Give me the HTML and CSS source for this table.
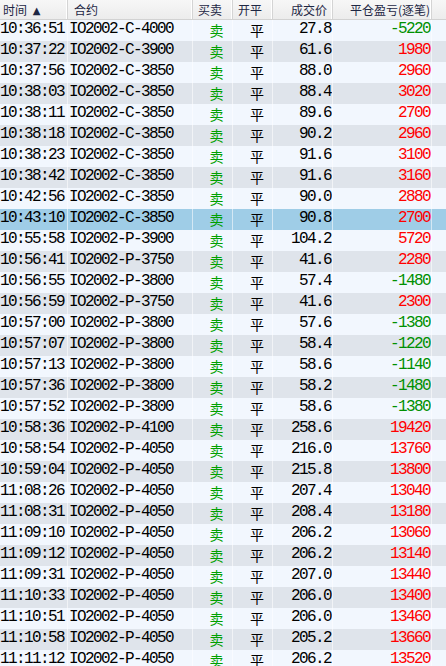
FILE: index.html
```html
<!DOCTYPE html>
<html>
<head>
<meta charset="utf-8">
<link rel="stylesheet" href="styles.css">
</head>
<body>
<div class="grid">
  <div class="head">
    <div class="hc c-time">时间 <span class="arrow">▲</span></div>
    <div class="hc c-code">合约</div>
    <div class="hc c-bs">买卖</div>
    <div class="hc c-oc">开平</div>
    <div class="hc c-px right">成交价</div>
    <div class="hc c-pl right">平仓盈亏(逐笔)</div>
    <div class="hc c-fill"></div>
  </div>
  <div id="rows"></div>
</div>
<script>
var data = [
["10:36:51","IO2002-C-4000","27.8","-5220"],
["10:37:22","IO2002-C-3900","61.6","1980"],
["10:37:56","IO2002-C-3850","88.0","2960"],
["10:38:03","IO2002-C-3850","88.4","3020"],
["10:38:11","IO2002-C-3850","89.6","2700"],
["10:38:18","IO2002-C-3850","90.2","2960"],
["10:38:23","IO2002-C-3850","91.6","3100"],
["10:38:42","IO2002-C-3850","91.6","3160"],
["10:42:56","IO2002-C-3850","90.0","2880"],
["10:43:10","IO2002-C-3850","90.8","2700"],
["10:55:58","IO2002-P-3900","104.2","5720"],
["10:56:41","IO2002-P-3750","41.6","2280"],
["10:56:55","IO2002-P-3800","57.4","-1480"],
["10:56:59","IO2002-P-3750","41.6","2300"],
["10:57:00","IO2002-P-3800","57.6","-1380"],
["10:57:07","IO2002-P-3800","58.4","-1220"],
["10:57:13","IO2002-P-3800","58.6","-1140"],
["10:57:36","IO2002-P-3800","58.2","-1480"],
["10:57:52","IO2002-P-3800","58.6","-1380"],
["10:58:36","IO2002-P-4100","258.6","19420"],
["10:58:54","IO2002-P-4050","216.0","13760"],
["10:59:04","IO2002-P-4050","215.8","13800"],
["11:08:26","IO2002-P-4050","207.4","13040"],
["11:08:31","IO2002-P-4050","208.4","13180"],
["11:09:10","IO2002-P-4050","206.2","13060"],
["11:09:12","IO2002-P-4050","206.2","13140"],
["11:09:31","IO2002-P-4050","207.0","13440"],
["11:10:33","IO2002-P-4050","206.0","13400"],
["11:10:51","IO2002-P-4050","206.0","13460"],
["11:10:58","IO2002-P-4050","205.2","13660"],
["11:11:12","IO2002-P-4050","206.2","13520"]
];
var html = "";
data.forEach(function(d, i){
  var cls = "row " + (i % 2 ? "even" : "odd") + (i === 9 ? " sel" : "");
  var pl = d[3].charAt(0) === "-" ? "neg" : "pos";
  html += '<div class="' + cls + '">' +
    '<div class="c c-time mono">' + d[0] + '</div>' +
    '<div class="c c-code mono">' + d[1] + '</div>' +
    '<div class="c c-bs cjk green">卖</div>' +
    '<div class="c c-oc cjk">平</div>' +
    '<div class="c c-px mono right">' + d[2] + '</div>' +
    '<div class="c c-pl mono right ' + pl + '">' + d[3] + '</div>' +
    '<div class="c c-fill"></div>' +
    '</div>';
});
document.getElementById("rows").innerHTML = html;
</script>
</body>
</html>
```
FILE: styles.css
```css
html, body {
  margin: 0;
  padding: 0;
  background: #f2f7fe;
  overflow: hidden;
}
.grid {
  width: 446px;
}
.head, .row {
  display: grid;
  grid-template-columns: 68px 125px 40px 40px 60px 99px 14px;
}
.head {
  height: 19px;
  background: linear-gradient(#f7f7f7, #ececec);
  border-bottom: 1px solid #d2d2d2;
}
.hc {
  font-family: "Noto Sans CJK SC", sans-serif;
  font-size: 12px;
  line-height: 19px;
  color: #1e2744;
  border-right: 1px solid #d4d4d4;
  box-shadow: inset -1px 0 0 #ffffff;
  padding-left: 5px;
  white-space: nowrap;
  overflow: hidden;
}
.hc.c-time { padding-left: 3px; }
.hc.c-code { padding-left: 6px; }
.hc.right { text-align: right; padding-left: 0; padding-right: 5px; }
.hc.c-fill { border-right: none; box-shadow: none; }
.arrow {
  font-size: 10px;
  font-family: "DejaVu Sans", sans-serif;
  margin-left: 3px;
  position: relative;
  top: -1px;
}
.row {
  height: 21px;
}
.row.odd { background: #f2f7fe; }
.row.even { background: #dfe4eb; }
.row.sel { background: #9fcde7; }
.c {
  height: 21px;
  line-height: 19px;
  border-right: 1px solid rgba(255, 255, 255, 0.55);
  white-space: nowrap;
  overflow: hidden;
  color: #000;
}
.c.c-fill { border-right: none; }
.mono {
  font-family: "Liberation Mono", monospace;
  font-size: 16px;
  letter-spacing: -1.6px;
}
.c-time.mono { padding-left: 0; }
.c-code.mono { padding-left: 1px; }
.right { text-align: right; padding-right: 1px; }
.c-pl.right { padding-right: 1px; }
.cjk {
  font-family: "Noto Sans CJK SC", sans-serif;
  font-size: 14px;
  line-height: 20px;
  text-align: center;
}
.c-bs.cjk { padding-left: 8px; }
.c-oc.cjk { padding-left: 9px; }
.green { color: #00a000; }
.neg { color: #009000; }
.pos { color: #ff0000; }
```
